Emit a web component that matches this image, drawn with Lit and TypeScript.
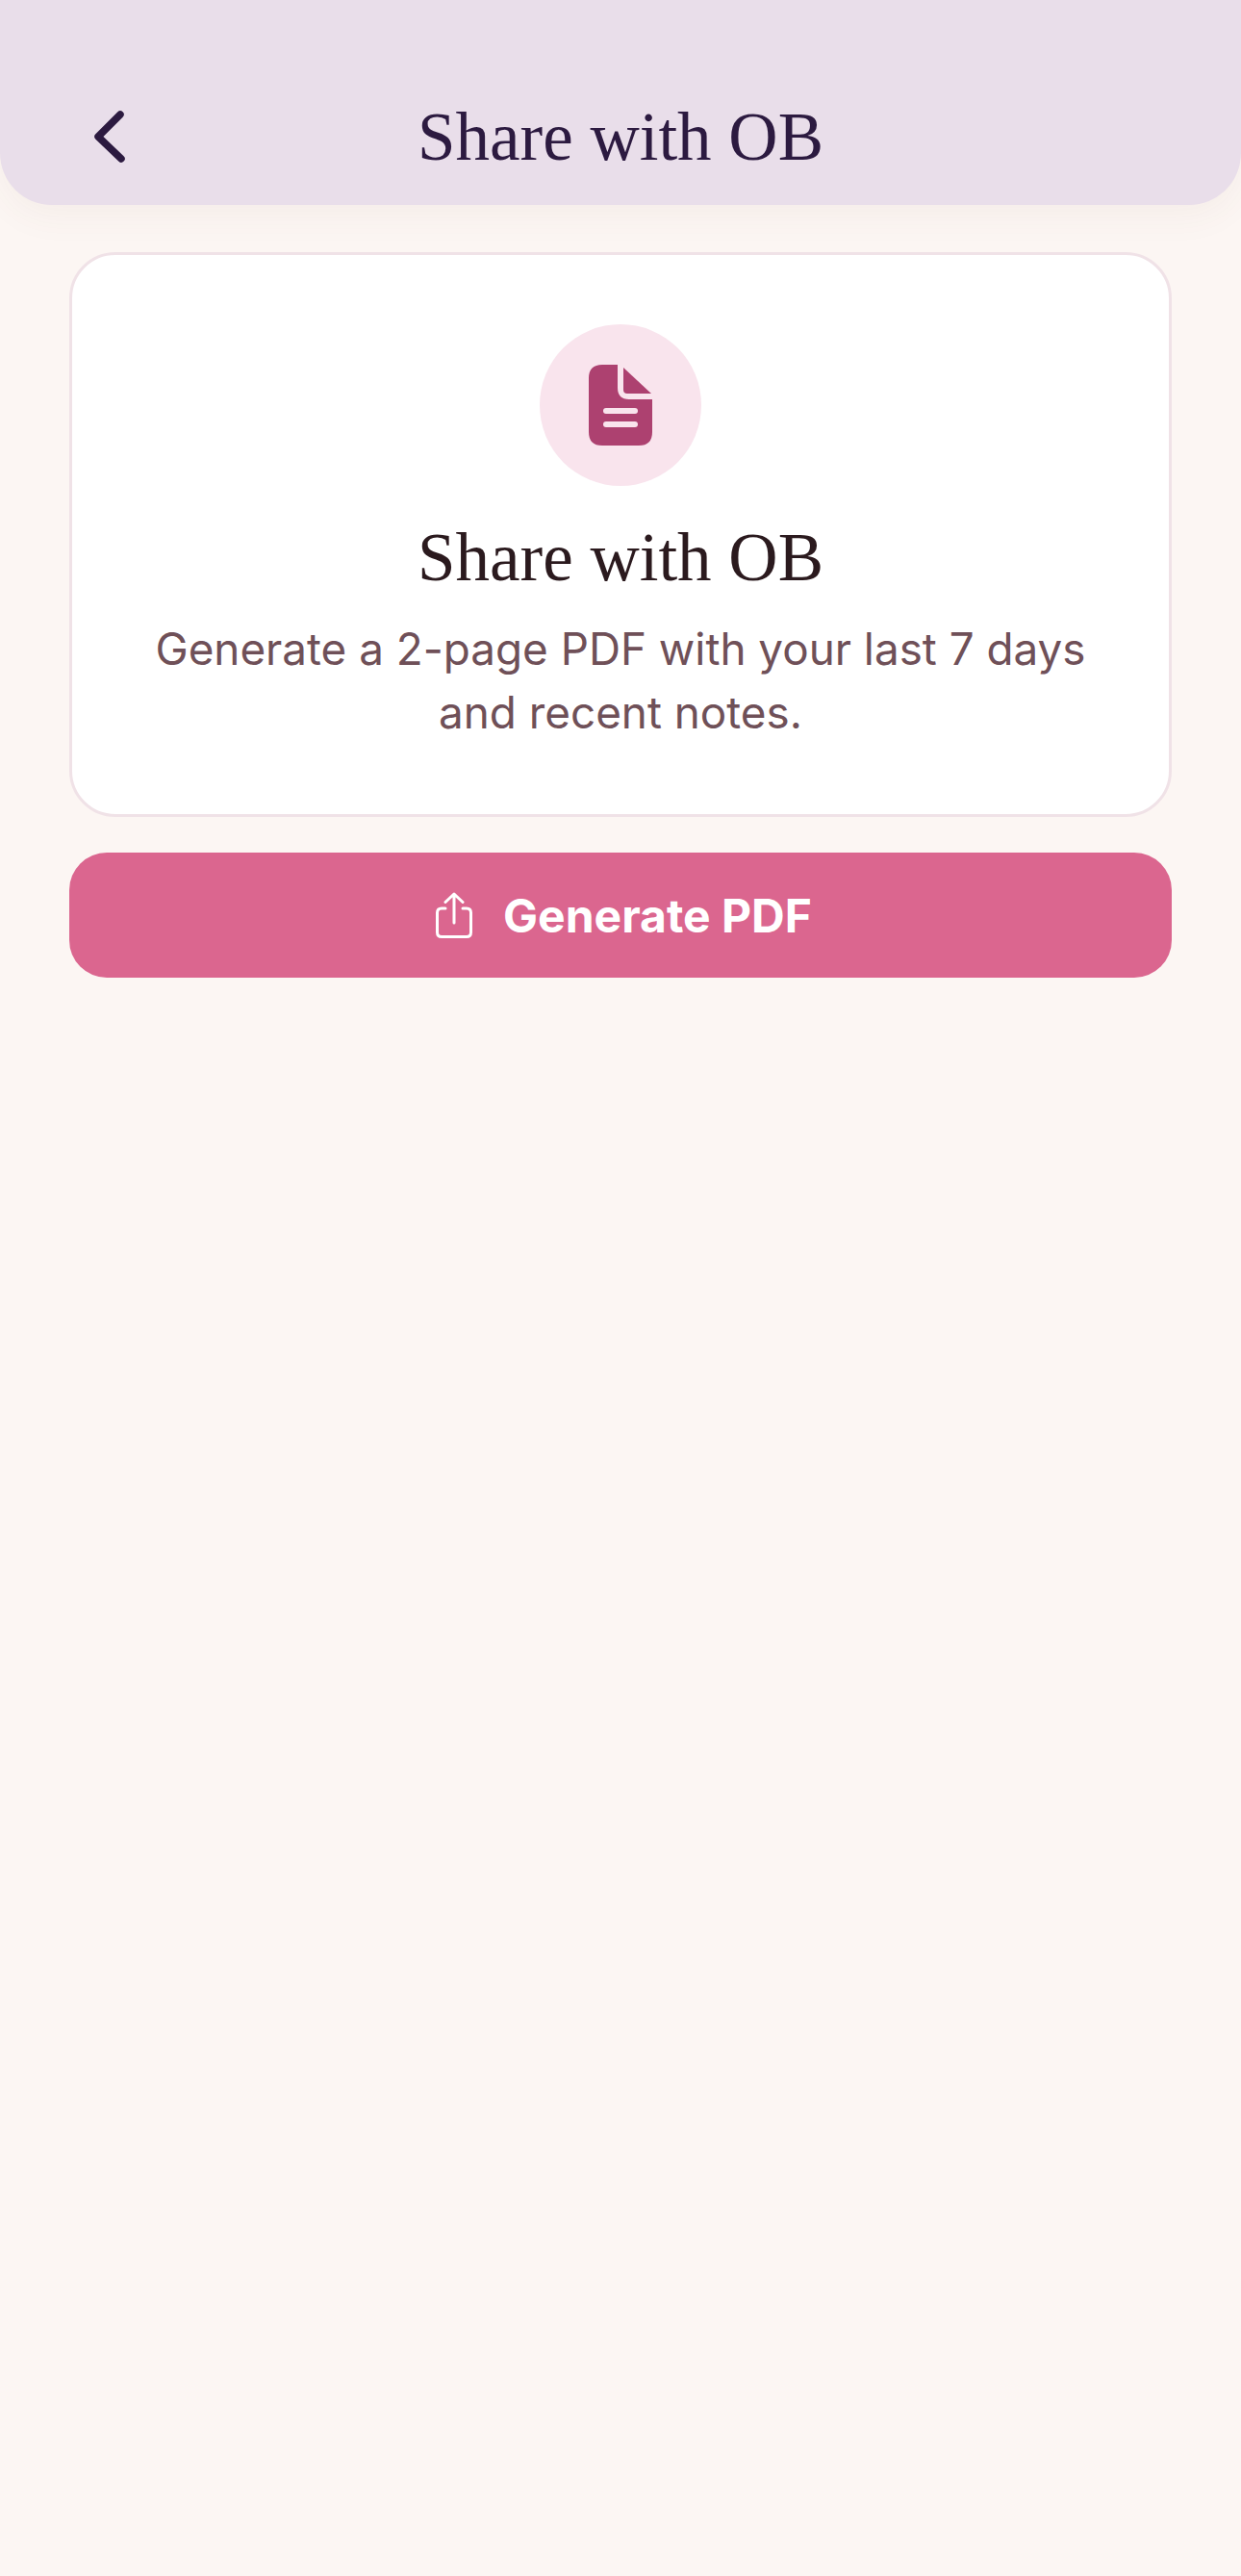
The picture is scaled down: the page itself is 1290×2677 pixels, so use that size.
import { LitElement, css, html } from 'lit';
import { customElement } from 'lit/decorators.js';

@customElement('app-root')
export class AppRoot extends LitElement {
  static styles = css`
    :host {
      display: block;
      min-height: 2677px;
      background-color: #fcf6f3;
      font-family: Inter, sans-serif;
    }
    .header {
      height: 213px;
      box-sizing: border-box;
      padding: 108px 72px 0 72px;
      display: flex;
      align-items: flex-start;
      justify-content: center;
      position: relative;
      background-color: #e9deea;
      border-radius: 0 0 54px 54px;
      box-shadow: 0 12px 36px rgba(120, 80, 60, 0.05);
    }
    .back {
      position: absolute;
      left: 90px;
      top: 112px;
      width: 48px;
      height: 60px;
    }
    .header h1 {
      margin: 0;
      font-family: 'Liberation Serif', serif;
      font-weight: 400;
      font-size: 71px;
      line-height: 68px;
      color: #2c1a40;
    }
    .content {
      padding: 49px 72px 0 72px;
      display: flex;
      flex-direction: column;
      gap: 37px;
    }
    .card {
      box-sizing: border-box;
      height: 587px;
      padding: 72px 60px 0 60px;
      display: flex;
      flex-direction: column;
      align-items: center;
      background-color: #fff;
      border: 3px solid #f0e2e7;
      border-radius: 48px;
    }
    .circle {
      width: 168px;
      height: 168px;
      flex: none;
      display: flex;
      align-items: center;
      justify-content: center;
      border-radius: 50%;
      background-color: #f9e4ed;
    }
    .card h2 {
      margin: 38px 0 0 0;
      font-family: 'Liberation Serif', serif;
      font-weight: 400;
      font-size: 71px;
      line-height: 72px;
      color: #2b1a1e;
    }
    .card p {
      margin: 27px 0 0 0;
      font-size: 45.800px;
      line-height: 66px;
      text-align: center;
      color: #6f5058;
    }
    .button {
      height: 130px;
      box-sizing: border-box;
      padding-left: 7px;
      display: flex;
      align-items: center;
      justify-content: center;
      gap: 32px;
      border-radius: 39px;
      background-color: #db668f;
      color: #fff;
      font-size: 48px;
      font-weight: 700;
    }
  `;

  render () {
    return html`
      <div class="header">
        <svg class="back" viewBox="0 0 48 60" fill="none">
          <path d="M35 7 L12 30 L36 53" stroke="#2c1a40" stroke-width="7.500" stroke-linecap="round" stroke-linejoin="round" />
        </svg>
        <h1>Share with OB</h1>
      </div>
      <div class="content">
        <div class="card">
          <div class="circle">
            <svg width="66" height="84" viewBox="0 0 66 84">
              <path fill="#ad4170" d="M14 0 H30 V24 Q30 36 42 36 H66 V70 Q66 84 52 84 H14 Q0 84 0 70 V14 Q0 0 14 0 Z" />
              <path fill="#ad4170" d="M36 3 L65 30 H40 Q36 30 36 26 Z" />
              <rect x="15" y="45" width="36" height="6" rx="3" fill="#f9e4ed" />
              <rect x="15" y="59" width="36" height="6" rx="3" fill="#f9e4ed" />
            </svg>
          </div>
          <h2>Share with OB</h2>
          <p>Generate a 2-page PDF with your last 7 days<br />and recent notes.</p>
        </div>
        <div class="button">
          <svg width="38" height="48" viewBox="0 0 38 48" fill="none" stroke="#fff" stroke-width="3" stroke-linecap="round" stroke-linejoin="round">
            <path d="M10 17 H6 Q1.500 17 1.500 21.500 V42 Q1.500 46.500 6 46.500 H32 Q36.500 46.500 36.500 42 V21.500 Q36.500 17 32 17 H28" />
            <path d="M19 32 V2 M10 10.500 L19 2 L28 10.500" />
          </svg>
          <span>Generate PDF</span>
        </div>
      </div>
    `;
  }
}
